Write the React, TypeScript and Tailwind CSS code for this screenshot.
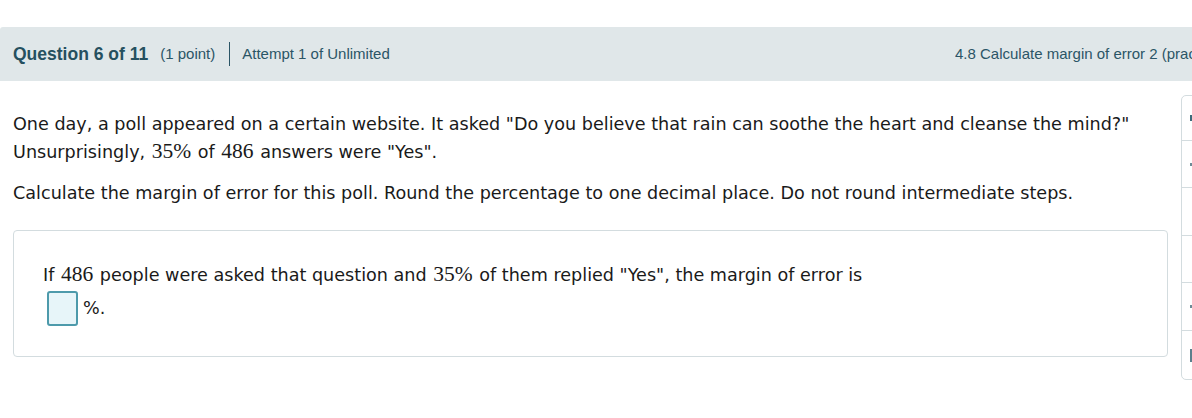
import React from "react";

const M = ({ children }: { children: React.ReactNode }) => (
  <span className="text-[21.5px] leading-[20px] mx-[1px]" style={{ fontFamily: '"Liberation Serif", "DejaVu Serif", serif' }}>
    {children}
  </span>
);

export default function App() {
  return (
    <div className="w-[1192px] h-[418px] overflow-hidden bg-white">
      <div className="pt-[27px]">
        <div
          className="h-[54px] bg-[#e0e7e9] rounded-tl-[3px] flex items-center text-[#2b5566]"
          style={{ fontFamily: '"Liberation Sans", Arial, sans-serif' }}
        >
          <div className="flex-1 flex items-center pl-[13px]">
            <span className="text-[17.5px] font-bold text-[#25505f]">Question 6 of 11</span>
            <span className="text-[15px] ml-[12px]">(1 point)</span>
            <span className="w-px h-[24px] bg-[#2b5566] ml-[14px] mr-[12px]" />
            <span className="text-[15px]">Attempt 1 of Unlimited</span>
          </div>
          <div className="w-[237px] shrink-0 whitespace-nowrap overflow-hidden text-[15px]">
            4.8 Calculate margin of error 2 (prac
          </div>
        </div>
        <div className="flex">
          <div
            className="w-[1168px] shrink-0 pl-[13px] text-[17.6px] text-[#1a1a1a]"
            style={{ fontFamily: '"DejaVu Sans", Verdana, sans-serif' }}
          >
            <p className="mt-[29px] leading-[28px]">
              One day, a poll appeared on a certain website. It asked "Do you believe that rain can soothe the heart and cleanse the mind?"
              <br />
              Unsurprisingly, <M>35%</M> of <M>486</M> answers were "Yes".
            </p>
            <p className="mt-[13px] leading-[28px]">
              Calculate the margin of error for this poll. Round the percentage to one decimal place. Do not round intermediate steps.
            </p>
            <div className="mt-[23px] border border-[#d3dcdf] rounded-[4px] pl-[29px] pt-[30px] pb-[30px]">
              <p className="leading-[28px]">
                If <M>486</M> people were asked that question and <M>35%</M> of them replied "Yes", the margin of error is
              </p>
              <div className="flex items-center mt-[2px]">
                <span className="ml-[4px] w-[31px] h-[35px] rounded-[3px] border-2 border-[#4d9aab] bg-[#e7f5f9]" />
                <span className="ml-[5px]">%.</span>
              </div>
            </div>
          </div>
          <div className="ml-[13px] mt-[14px] w-[60px] h-[285px] shrink-0 border border-[#d3dcdf] rounded-[5px] flex flex-col">
            <div className="h-[45px] border-b border-[#d3dcdf] flex items-center">
              <span className="ml-[8px] w-[2px] h-[6px] bg-[#3d6b7a]" />
            </div>
            <div className="h-[47px] border-b border-[#d3dcdf] flex items-center">
              <span className="ml-[8px] w-[2px] h-[3px] bg-[#6d8c97]" />
            </div>
            <div className="h-[48px] border-b border-[#d3dcdf]" />
            <div className="h-[47px] border-b border-[#d3dcdf]" />
            <div className="h-[48px] border-b border-[#d3dcdf] flex items-center">
              <span className="ml-[8px] w-[2px] h-[3px] bg-[#6d8c97]" />
            </div>
            <div className="flex-1 flex items-center">
              <span className="ml-[8px] w-[2px] h-[13px] bg-[#5b7f8c]" />
            </div>
          </div>
        </div>
      </div>
    </div>
  );
}
